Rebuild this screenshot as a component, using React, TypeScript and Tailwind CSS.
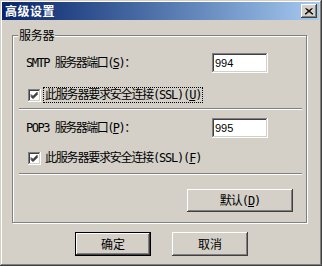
import React from 'react';

const UI = { fontFamily: '"DejaVu Sans Mono", "Noto Sans CJK SC", monospace' };
const CJK = { fontFamily: '"Noto Sans CJK SC", "Liberation Sans", sans-serif' };
const SANS = { fontFamily: '"Liberation Sans", Arial, sans-serif' };

const raised =
  'bg-[#d4d0c8] shadow-[inset_-1px_-1px_#404040,inset_1px_1px_#ffffff,inset_-2px_-2px_#808080,inset_2px_2px_#d4d0c8]';
const sunken =
  'bg-white shadow-[inset_-1px_-1px_#ffffff,inset_1px_1px_#808080,inset_-2px_-2px_#d4d0c8,inset_2px_2px_#404040]';

const Check: React.FC = () => (
  <div className={`w-[13px] h-[13px] shrink-0 ${sunken} flex items-center justify-center`}>
    <svg width="13" height="13" viewBox="0 0 13 13">
      <path d="M3 5.5 L5 7.5 L9.5 3 M3 6.5 L5 8.5 L9.5 4 M3 7.5 L5 9.5 L9.5 5" stroke="#000" strokeWidth="1" fill="none" />
    </svg>
  </div>
);

const Etch: React.FC<{ className?: string }> = ({ className }) => (
  <div className={`h-[2px] border-t border-[#808080] border-b border-b-white ${className ?? ''}`} />
);

const PortRow: React.FC<{ prefix: string; hot: string; value: string; className?: string }> = ({
  prefix,
  hot,
  value,
  className,
}) => (
  <div className={`flex items-center h-[20px] pl-[13px] pr-[38px] ${className ?? ''}`}>
    <div className="flex-1 text-[12px] leading-[14px] tracking-[-1.5px] text-black">
      {prefix} 服务器端口(<span className="underline">{hot}</span>)：
    </div>
    <div className={`w-[56px] h-[20px] ${sunken} pl-[3px] flex items-center text-[11px] text-black`} style={SANS}>
      {value}
    </div>
  </div>
);

export default function App() {
  return (
    <div
      className="w-[322px] h-[266px] bg-[#d4d0c8] p-[2px] flex flex-col shadow-[inset_-1px_-1px_#404040,inset_1px_1px_#d4d0c8,inset_-2px_-2px_#808080,inset_2px_2px_#ffffff]"
      style={UI}
    >
      {/* title bar */}
      <div className="h-[18px] mr-[1px] bg-gradient-to-r from-[#0a246a] to-[#a6caf0] flex items-center justify-between pl-[3px] pr-[2px]">
        <span className="text-white font-bold text-[12px] leading-[14px] tracking-[0.5px]" style={CJK}>
          高级设置
        </span>
        <div className={`w-[16px] h-[14px] ${raised} flex items-center justify-center`}>
          <svg width="8" height="7" viewBox="0 0 8 7">
            <path d="M0.5 0.5 L7.5 6.5 M1.5 0.5 L8 6 M7.5 0.5 L0.5 6.5 M6.5 0.5 L0 6" stroke="#000" strokeWidth="1" fill="none" />
          </svg>
        </div>
      </div>

      {/* group box */}
      <div className="relative ml-[10px] mt-[15px] w-[295px] h-[188px] border border-[#808080] shadow-[inset_1px_1px_#ffffff,1px_1px_#ffffff] flex flex-col">
        <span className="absolute left-[5px] top-[-8px] px-[1px] bg-[#d4d0c8] text-[12px] leading-[14px] tracking-[-0.3px] text-black" style={CJK}>
          服务器
        </span>

        <PortRow prefix="SMTP" hot="S" value="994" className="mt-[17px]" />

        <div className="flex items-center h-[16px] mt-[14px] pl-[15px]">
          <Check />
          <div className="ml-[2px] h-[16px] border border-dotted border-black px-[1px] flex items-center text-[12px] leading-[14px] tracking-[-1.2px] text-black">
            此服务器要求安全连接(SSL)(<span className="underline">U</span>)
          </div>
        </div>

        <Etch className="mt-[5px] ml-[6px] w-[283px]" />

        <PortRow prefix="POP3" hot="P" value="995" className="mt-[8px]" />

        <div className="flex items-center h-[16px] mt-[12px] pl-[15px]">
          <Check />
          <div className="ml-[2px] h-[16px] border border-transparent px-[1px] flex items-center text-[12px] leading-[14px] tracking-[-1.2px] text-black">
            此服务器要求安全连接(SSL)(<span className="underline">F</span>)
          </div>
        </div>

        <Etch className="mt-[7px] ml-[6px] w-[283px]" />

        <div className="flex justify-end pr-[13px] mt-[14px]">
          <div className={`w-[106px] h-[23px] ${raised} flex items-center justify-center text-[12px] tracking-[-1px] text-black`}>
            默认(<span className="underline">D</span>)
          </div>
        </div>
      </div>

      {/* dialog buttons */}
      <div className="flex justify-center gap-[21px] mt-[9px] pl-[1px]" style={CJK}>
        <div className="w-[76px] h-[24px] border border-black">
          <div className={`w-full h-full ${raised} flex items-center justify-center text-[12px] text-black`}>确定</div>
        </div>
        <div className={`w-[76px] h-[24px] ${raised} flex items-center justify-center text-[12px] text-black`}>取消</div>
      </div>
    </div>
  );
}
